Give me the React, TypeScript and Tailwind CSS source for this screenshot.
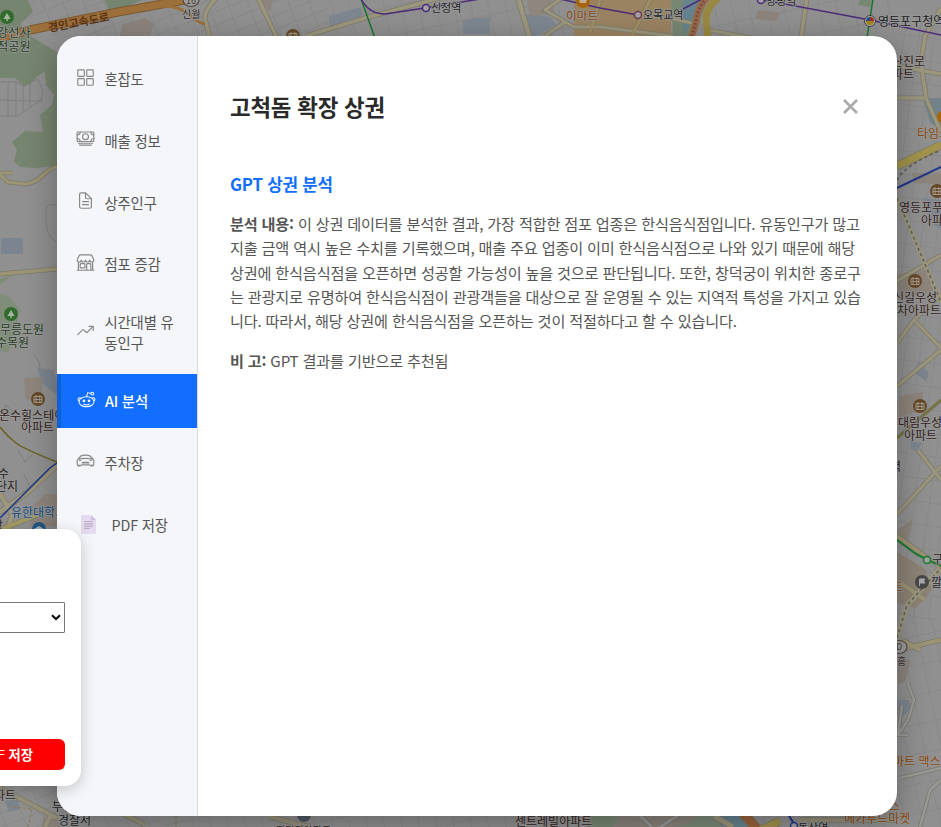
import React from "react";
import {
  IoGridOutline,
  IoCashOutline,
  IoDocumentTextOutline,
  IoStorefrontOutline,
  IoTrendingUpOutline,
  IoLogoReddit,
  IoCarSportOutline,
} from "react-icons/io5";

const FONT = "font-['Noto_Sans_CJK_KR','Noto_Sans',sans-serif]";

type Line = { d: string; c: string; w: number; dash?: string };

const areas: [string, string][] = [
  // parks
  ["M0 0H28L33 12L20 24L26 33L45 45L57 52V166L35 168L20 167L14 161L17 150L12 142L25 131L43 132L40 115L52 105L54 95L46 85L45 71L38 76L30 84L24 86L15 78H0Z", "#76856f"],
  ["M105 0H142L128 6L109 12Z", "#76856f"],
  ["M0 294L10 297L19 309L17 325L8 353L0 350Z", "#7f8d79"],
  ["M0 279L13 275L0 285Z", "#7f8d79"],
  ["M671 0H708L694 36H673Z", "#788774"],
  ["M860 0H872L870 7L858 5Z", "#788774"],
  ["M590 816H618L613 827H586Z", "#788774"],
  ["M677 827L690 815H712L725 827Z", "#7b8a78"],
  // water and campuses
  ["M684 0H701L690 24L684 36L681 12Z", "#66838f"],
  ["M329 16L361 7L363 20L330 28Z", "#7e8791"],
  ["M463 20L490 17V34H463Z", "#7e8791"],
  ["M527 14L550 17L556 25L535 36H528Z", "#7e8791"],
  ["M1 238H23V254H1Z", "#7c858f"],
  ["M37 368L53 370L57 380V395L43 384Z", "#7c858f"],
  ["M923 198L941 200V230L930 222Z", "#7c858f"],
  ["M918 361L929 373L926 382L914 372Z", "#7c858f"],
  ["M910 441L922 443L917 452L911 449Z", "#7c858f"],
  ["M897 700L909 700L911 708L903 717L897 715Z", "#7c858f"],
  ["M923 98H941V130L930 122Z", "#71828b"],
  ["M715 816H740L750 827H722Z", "#66838f"],
  ["M5 801L18 799L20 809L9 812Z", "#7c858f"],
  // built-up blocks
  ["M574 0H671V36H574Z", "#9a8361"],
  ["M527 0H552L555 14L530 16Z", "#8e867f"],
  ["M122 24L145 18L154 24L150 36H120Z", "#8c837e"],
  ["M258 0H273L270 12Z", "#8c837e"],
  ["M758 10L780 13L776 21L755 19Z", "#8e837c"],
  ["M24 378L42 377V398L26 400Z", "#8e857c"],
  ["M31 508L45 494H57V526H30Z", "#8e857c"],
  ["M897 274L926 270L936 290L897 300Z", "#8d847b"],
  ["M899 396L923 392L921 409L899 419Z", "#8d847b"],
  ["M897 552L925 569L932 590L916 608L897 603Z", "#8c8275"],
  ["M897 655L910 661L905 682L898 684Z", "#8c837c"],
  ["M897 530L913 519L906 544L897 540Z", "#8d847b"],
  ["M912 173H941V184L914 183Z", "#8d847b"],
  ["M618 816H700L680 827H613Z", "#89837b"],
  ["M43 818L55 812L62 827H42Z", "#89837b"],
];

const roads: Line[] = [
  { d: "M258 -2L277 38", c: "#9b967c", w: 3.5 },
  { d: "M216 -2Q204 12 205 18T210 38", c: "#9b967c", w: 3.5 },
  { d: "M306 36L365 18L440 -2", c: "#9b967c", w: 3.5 },
  { d: "M518 -2L530 38", c: "#9b967c", w: 4.5 },
  { d: "M562 -2L545 10L574 27H600L672 36M545 36L565 22", c: "#9b967c", w: 3 },
  { d: "M600 0L590 32M650 0L632 36", c: "#a18d5f", w: 3 },
  { d: "M807 -2L801 38", c: "#9b967c", w: 3.5 },
  { d: "M708 30L752 38M670 18L700 25", c: "#9b967c", w: 3 },
  { d: "M941 8L925 36L921 62L926 98L941 132M897 66L941 74M897 98H926", c: "#9b967c", w: 3.5 },
  { d: "M0 175L8 182L24 184Q34 184 42 176T57 167M0 173H13", c: "#9c9575", w: 3 },
  { d: "M0 274L57 269", c: "#9c9575", w: 3.5 },
  { d: "M0 512L28 492L57 465M0 494L12 514L8 529", c: "#9b967c", w: 4.5 },
  { d: "M0 530L42 513", c: "#a39a61", w: 4 },
  { d: "M897 166L941 145", c: "#a2934c", w: 7 },
  { d: "M897 281L941 255M897 343L914 320L941 294M914 320L941 348M897 386L941 350", c: "#9b967c", w: 3 },
  { d: "M897 514L941 466M918 450L941 480", c: "#9b967c", w: 3 },
  { d: "M897 536L930 560L941 567M901 583L925 600M897 650L941 640M902 640L920 650", c: "#9c9474", w: 4 },
  { d: "M897 438L941 400", c: "#77723a", w: 2 },
  { d: "M0 788L57 818M110 806L145 825M270 817L310 827M897 820H800", c: "#96917a", w: 4 },
  { d: "M45 827L51 815L56 818", c: "#96917a", w: 4 },
  { d: "M714 816L733 827", c: "#9b967c", w: 5 },
  { d: "M742 812L758 830", c: "#99653b", w: 9 },
  { d: "M756 832L780 821", c: "#a2934c", w: 7 },
  { d: "M640 816L652 827M660 827L680 814", c: "#999", w: 3 },
  { d: "M902 705L898 735L908 720L914 700L908 684M897 735H908M900 778L941 768M920 827L930 790L941 780", c: "#999", w: 2.5 },
];

const highways: Line[] = [
  { d: "M0 38L30 30L118 12L190 -1", c: "#7d5930", w: 9 },
  { d: "M0 38L30 30L118 12L190 -1", c: "#9c6f3b", w: 7 },
  { d: "M162 6Q180 6 190 15T205 24", c: "#9c6f3b", w: 3 },
  { d: "M707 -2Q697 8 696 22L691 38", c: "#9a6b4c", w: 7 },
  { d: "M707 -2Q697 8 696 22L691 38", c: "#7c4c3b", w: 3, dash: "2 2" },
  { d: "M718 -2Q706 8 706 20L708 38", c: "#988840", w: 7 },
];

const rails: Line[] = [
  { d: "M361 -1L375 38", c: "#19762a", w: 1.5 },
  { d: "M361 -1Q369 14 385 14L425 8L480 -1", c: "#4c2b7a", w: 1.5 },
  { d: "M560 -1L600 8L638 15M683 9L702 -1", c: "#4c2b7a", w: 1.5 },
  { d: "M758 -1L870 20L941 35", c: "#4c2b7a", w: 1.5 },
  { d: "M873 -1L867 38", c: "#19762a", w: 1.5 },
  { d: "M897 188L941 167", c: "#20378a", w: 2 },
  { d: "M0 427Q8 437 16 443T57 462", c: "#65621f", w: 1.5 },
  { d: "M0 518L50 468L57 463", c: "#20378a", w: 1.5 },
  { d: "M897 198L941 302", c: "#9b967c", w: 4 },
  { d: "M897 198L941 302", c: "#5d5d58", w: 1.5, dash: "3 3" },
  { d: "M897 180Q905 165 941 150", c: "#5b5a4c", w: 1.5, dash: "3 3" },
  { d: "M897 638L907 605L941 568", c: "#9b967c", w: 5 },
  { d: "M897 638L907 605L941 568", c: "#5d5d58", w: 1.5, dash: "3 3" },
  { d: "M897 540L916 554L941 566", c: "#197b34", w: 2 },
  { d: "M788 814L794 824L790 830", c: "#20378a", w: 2 },
  { d: "M8 806L32 809L28 827M140 812H176V827", c: "#8d7753", w: 1, dash: "3 2" },
];

const labels: { t: string; x: number; y: number; c: string; s?: number }[] = [
  { t: "강선사", x: -3, y: 37, c: "#263f22", s: 12.2 },
  { t: "적공원", x: -3, y: 50.5, c: "#263f22", s: 12.2 },
  { t: "신월", x: 182, y: 18, c: "#332b27", s: 10 },
  { t: "신정역", x: 431, y: 11.5, c: "#262626", s: 11 },
  { t: "이마트", x: 566, y: 20, c: "#8b4a0d", s: 11.7 },
  { t: "오목교역", x: 643, y: 19, c: "#262626", s: 11 },
  { t: "양평역", x: 766, y: 5, c: "#262626", s: 11 },
  { t: "영등포구청역", x: 878, y: 26, c: "#1c1c1c", s: 12 },
  { t: "산진로", x: 892, y: 66, c: "#33231c" },
  { t: "파트", x: 892, y: 78.5, c: "#33231c" },
  { t: "타임스", x: 917, y: 138, c: "#8b4a0d" },
  { t: "영등포푸", x: 899, y: 212, c: "#33231c" },
  { t: "아파트", x: 921, y: 224.5, c: "#33231c" },
  { t: "신길우성", x: 893, y: 302, c: "#33231c" },
  { t: "차아파트", x: 897, y: 314.5, c: "#33231c" },
  { t: "대림우성", x: 898, y: 427, c: "#33231c" },
  { t: "아파트", x: 904, y: 439.5, c: "#33231c" },
  { t: "역", x: 890, y: 471, c: "#262626" },
  { t: "구로", x: 932, y: 564, c: "#262626" },
  { t: "깔끔", x: 931, y: 587, c: "#262626" },
  { t: "트", x: 892, y: 592, c: "#8b4a0d" },
  { t: "흥", x: 897, y: 665, c: "#332b27", s: 10 },
  { t: "마트 맥스", x: 893, y: 766, c: "#8b4a0d" },
  { t: "스", x: 889, y: 811, c: "#8b4a0d" },
  { t: "메가푸드마켓", x: 844, y: 823, c: "#8b4a0d" },
  { t: "동산역", x: 798, y: 832, c: "#262626", s: 11 },
  { t: "센트레빌아파트", x: 515, y: 826, c: "#33231c" },
  { t: "파밀리아파트", x: 276, y: 834, c: "#33231c", s: 10 },
  { t: "무릉도원", x: 0, y: 334, c: "#263f22" },
  { t: "수목원", x: -4, y: 347, c: "#263f22" },
  { t: "온수힐스테이", x: -1, y: 419.5, c: "#33231c" },
  { t: "아파트", x: 21, y: 432, c: "#33231c" },
  { t: "수", x: -2, y: 478, c: "#262626" },
  { t: "단지", x: -4, y: 490.5, c: "#262626" },
  { t: "유한대학교", x: 11, y: 517, c: "#174b7d" },
  { t: "장", x: -8, y: 530, c: "#33231c" },
  { t: "파트", x: -6, y: 800, c: "#33231c" },
  { t: "부천", x: 52, y: 811, c: "#262626" },
  { t: "경찰서", x: 58, y: 825, c: "#262626" },
];

function Apt({ x, y }: { x: number; y: number }) {
  return (
    <g transform={`translate(${x} ${y})`}>
      <circle r="7" fill="#664827" />
      <path d="M-4 -2.5H4V3.5H-4ZM-2 -4V4M1.8 -4V4M-4 .5H4" fill="none" stroke="#a2988c" strokeWidth="1" />
    </g>
  );
}

function Tree({ x, y }: { x: number; y: number }) {
  return (
    <g transform={`translate(${x} ${y})`}>
      <circle r="7" fill="#326b2c" />
      <path d="M0 -4L3.6 2H-3.6ZM-.7 2H.7V4H-.7Z" fill="#a7b5a4" />
    </g>
  );
}

function Station({ x, y, c }: { x: number; y: number; c: string }) {
  return <circle cx={x} cy={y} r="3.5" fill="#a3a3a3" stroke={c} strokeWidth="1.5" />;
}

function Strokes({ items }: { items: Line[] }) {
  return (
    <>
      {items.map((l, i) => (
        <path key={i} d={l.d} fill="none" stroke={l.c} strokeWidth={l.w} strokeDasharray={l.dash} strokeLinejoin="round" />
      ))}
    </>
  );
}

function CityMap() {
  return (
    <svg className="absolute inset-0" width="941" height="827" viewBox="0 0 941 827">
      <defs>
        <pattern id="blocksA" width="19" height="13" patternUnits="userSpaceOnUse" patternTransform="rotate(-22)">
          <path d="M0 0H19M0 0V13" stroke="#818181" strokeWidth="1" fill="none" />
        </pattern>
        <pattern id="blocksB" width="15" height="23" patternUnits="userSpaceOnUse" patternTransform="rotate(8)">
          <path d="M0 0H15M0 0V23" stroke="#828282" strokeWidth="1" fill="none" />
        </pattern>
        <pattern id="blocksC" width="17" height="29" patternUnits="userSpaceOnUse" patternTransform="rotate(-12)">
          <path d="M0 0H17M0 0V29" stroke="#828282" strokeWidth="1" fill="none" />
        </pattern>
      </defs>
      <rect width="941" height="827" fill="#909090" />
      <path d="M30 0H330V36H30ZM0 780H160V827H0Z" fill="url(#blocksA)" />
      <path d="M330 0H897V36H330ZM897 620H941V827H897ZM160 816H590V827H160Z" fill="url(#blocksC)" />
      <path d="M897 20H941V620H897ZM700 814H897V827H700Z" fill="url(#blocksB)" />
      <path d="M0 82H16L24 86L38 79L43 90L41 101L30 107L18 116H0M0 100L42 101M8 82V116M16 82V115M23 86V112M30 84V106" fill="none" stroke="#7f7f7f" />
      <path d="M57 205Q44 201 46 215Q45 228 51 238L57 242M33 353L39 362L42 378M3 420L6 405L14 412M18 450L25 462L35 452M24 474L31 490L44 480" fill="none" stroke="#7c807b" />
      {areas.map(([d, c], i) => (
        <path key={i} d={d} fill={c} />
      ))}
      <g fill="none" stroke="#7c7b6e">
        {roads.map((l, i) => (
          <path key={i} d={l.d} strokeWidth={l.w + 1.6} />
        ))}
      </g>
      <Strokes items={roads} />
      <Strokes items={highways} />
      <Strokes items={rails} />
      <Tree x={7} y={17} />
      <Tree x={11} y={314} />
      <Apt x={293} y={36} />
      <Apt x={38} y={399} />
      <Apt x={937} y={191} />
      <Apt x={915} y={281} />
      <Apt x={920} y={406} />
      <Station x={426} y={8} c="#4c2b7a" />
      <Station x={638} y={15} c="#6b3a58" />
      <Station x={761} y={0} c="#4c2b7a" />
      <Station x={927} y={560} c="#197b34" />
      <Station x={794} y={826} c="#20378a" />
      <circle cx="583" cy="1" r="7" fill="#a6640c" />
      <path d="M579 -1H587L586 3H580Z" fill="#c0ad94" />
      <circle cx="943" cy="117" r="6" fill="#a6640c" />
      <circle cx="870" cy="21" r="5.5" fill="#aaa" stroke="#444" strokeWidth="1" />
      <path d="M870 21V17A4 4 0 0 1 874 21Z" fill="#a32a24" />
      <path d="M870 21H874A4 4 0 0 1 866 21Z" fill="#a88419" />
      <path d="M870 21H866A4 4 0 0 1 870 17Z" fill="#234d93" />
      <circle cx="39" cy="529" r="7" fill="#245784" />
      <path d="M34 529L39 526L44 529L39 532Z" fill="#a5b3bf" />
      <circle cx="922" cy="582" r="7" fill="#484848" />
      <path d="M919.5 586V579H925L923.5 581L925 583H920" fill="#aaa" stroke="#aaa" />
      <circle cx="304" cy="815" r="7" fill="#505860" />
      <g fill="#9d9d9d" stroke="#54463d" strokeWidth="1.2">
        <ellipse cx="191" cy="0" rx="8" ry="6.5" />
        <ellipse cx="899" cy="647" rx="8" ry="6.5" />
      </g>
      <text x="186" y="4" fontSize="9" fill="#4c3c32">16</text>
      <text x="896" y="650" fontSize="9" fill="#4c3c32">D</text>
      <g stroke="#999" strokeWidth="1.6" strokeLinejoin="round" className="[paint-order:stroke]">
        {labels.map((l, i) => (
          <text key={i} x={l.x} y={l.y} fill={l.c} fontSize={l.s ?? 12}>
            {l.t}
          </text>
        ))}
      </g>
      <text x="49" y="32" fontSize="11.2" fontWeight="700" fill="#5c3412" transform="rotate(-10.5 49 32)">
        경인고속도로
      </text>
    </svg>
  );
}

function PdfIcon() {
  return (
    <svg width="15" height="19" viewBox="0 0 15 19">
      <path d="M0 0H10L15 5V19H0Z" fill="#e5daf0" />
      <path d="M10 0L15 5H10Z" fill="#cfbfdf" />
      <path d="M3 6.5H12M3 8.8H12M3 11.1H12M3 13.4H9" stroke="#b9b0c0" strokeWidth="1.2" />
    </svg>
  );
}

const menu = [
  { label: "혼잡도", icon: <IoGridOutline /> },
  { label: "매출 정보", icon: <IoCashOutline /> },
  { label: "상주인구", icon: <IoDocumentTextOutline /> },
  { label: "점포 증감", icon: <IoStorefrontOutline /> },
  { label: "시간대별 유동인구", icon: <IoTrendingUpOutline />, tall: true },
  { label: "AI 분석", icon: <IoLogoReddit />, active: true },
  { label: "주차장", icon: <IoCarSportOutline /> },
  { label: "PDF 저장", icon: <PdfIcon />, pdf: true },
];

function Sidebar() {
  return (
    <nav className="flex w-[141px] shrink-0 flex-col gap-[7.75px] border-r border-[#dcdde1] bg-[#f5f6fa] pt-4">
      {menu.map((m) => (
        <div
          key={m.label}
          className={`flex items-center pr-4 text-[14.4px] leading-[20.9px] tracking-[-0.013em] ${
            m.tall ? "h-[67.25px]" : "h-[54px]"
          } ${
            m.active
              ? "border-l-4 border-[#0f5fd6] bg-[#126eff] pl-[15px] font-medium text-white"
              : "pl-[19px] text-[#555]"
          }`}
        >
          <span
            className={`flex shrink-0 text-[19px] ${
              m.pdf
                ? "w-[35.5px] pb-0 pl-[5px]"
                : m.active
                  ? "w-[29px] pb-[3px] pl-px"
                  : "w-[28.5px] pb-[4px] text-[#888]"
            }`}
          >
            {m.icon}
          </span>
          <span className={`break-all ${m.active || m.tall ? "" : "pt-[1.2px]"}`}>{m.label}</span>
        </div>
      ))}
    </nav>
  );
}

function Analysis() {
  return (
    <main className="flex-1 px-8 pt-[54px] tracking-[-0.013em]">
      <div className="flex items-center justify-between pr-[6px]">
        <h2 className="text-[22.4px] leading-8 font-bold text-[#2a2a2a]">고척돔 확장 상권</h2>
        <svg width="17" height="17" viewBox="0 0 17 17" className="text-[#aaa]">
          <path d="M2 2L15 15M15 2L2 15" stroke="currentColor" strokeWidth="2.6" />
        </svg>
      </div>
      <h3 className="mt-[50px] text-[16.8px] leading-6 font-bold text-[#126eff]">GPT 상권 분석</h3>
      <div className="mt-[15px] space-y-[15.2px] text-[15.2px] leading-[24.32px] break-all text-[#555]">
        <p>
          <b>분석 내용:</b> 이 상권 데이터를 분석한 결과, 가장 적합한 점포 업종은 한식음식점입니다. 유동인구가 많고 지출 금액
          역시 높은 수치를 기록했으며, 매출 주요 업종이 이미 한식음식점으로 나와 있기 때문에 해당 상권에 한식음식점을
          오픈하면 성공할 가능성이 높을 것으로 판단됩니다. 또한, 창덕궁이 위치한 종로구는 관광지로 유명하여
          한식음식점이 관광객들을 대상으로 잘 운영될 수 있는 지역적 특성을 가지고 있습니다. 따라서, 해당 상권에
          한식음식점을 오픈하는 것이 적절하다고 할 수 있습니다.
        </p>
        <p>
          <b>비 고:</b> GPT 결과를 기반으로 추천됨
        </p>
      </div>
    </main>
  );
}

function SearchCard() {
  return (
    <aside className="absolute top-[529px] -left-[219px] flex h-[257px] w-[300px] flex-col justify-between rounded-2xl bg-white px-4 pt-[73px] pb-4 shadow-[0_4px_16px_rgba(0,0,0,0.2)]">
      <div className="flex h-[31px] items-center justify-end rounded-[1px] border border-[#767676] pr-[3px]">
        <svg width="10" height="7" viewBox="0 0 10 7">
          <path d="M1 1.2L5 5L9 1.2" fill="none" stroke="#000" strokeWidth="2" />
        </svg>
      </div>
      <button className="flex h-[31px] items-center justify-end gap-[3.5px] rounded-md bg-[#f00] pr-8 text-[13.33px] text-white">
        <span className="font-['Liberation_Sans',sans-serif]">PDF</span>
        <span className="font-bold">저장</span>
      </button>
    </aside>
  );
}

export default function App() {
  return (
    <div className={`relative flex h-[827px] w-[941px] overflow-hidden pt-9 pl-[57px] ${FONT}`} lang="ko">
      <CityMap />
      <section className="relative flex h-[780px] w-[840px] overflow-hidden rounded-3xl bg-white shadow-[0_8px_32px_rgba(0,0,0,0.3)]">
        <Sidebar />
        <Analysis />
      </section>
      <SearchCard />
    </div>
  );
}
